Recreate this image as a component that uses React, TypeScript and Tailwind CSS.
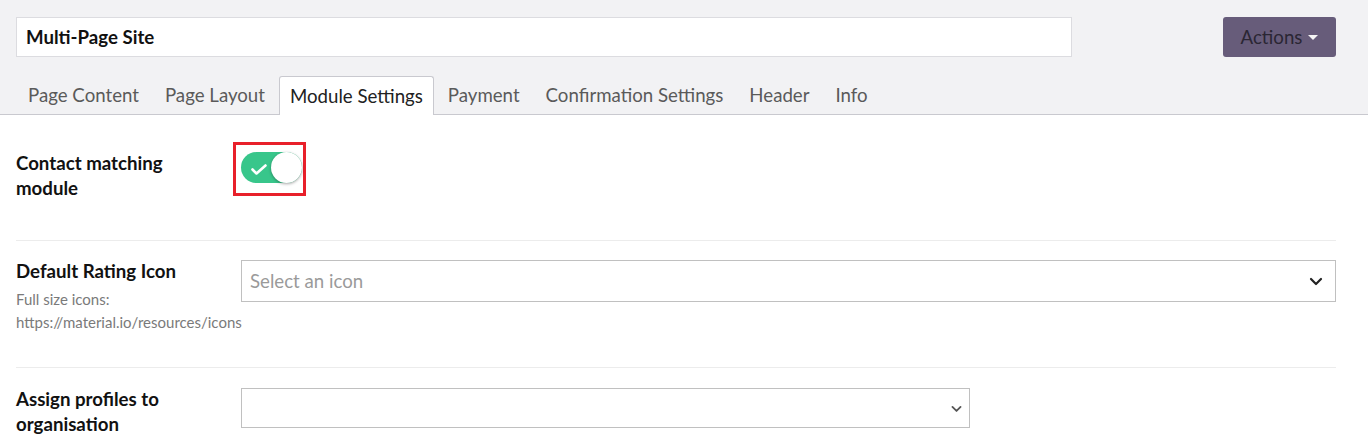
import React from 'react';

const tabs = [
  'Page Content',
  'Page Layout',
  'Module Settings',
  'Payment',
  'Confirmation Settings',
  'Header',
  'Info',
];

const Chevron = ({ className }: { className?: string }) => (
  <svg viewBox="0 0 16 16" className={className} fill="none" stroke="currentColor" strokeWidth={2.2} strokeLinecap="round" strokeLinejoin="round">
    <path d="M3 6l5 5 5-5" />
  </svg>
);

export default function App() {
  return (
    <div className="min-h-[445px] bg-white text-[#212529]" style={{ fontFamily: 'Lato, "Noto Sans", sans-serif' }}>
      {/* Header */}
      <div className="border-b border-[#c9c9cf] bg-[#f2f2f4] px-4 pt-[17px]">
        <div className="flex items-start justify-between">
          <div className="flex h-10 w-[1056px] items-center border border-[#dcdce0] bg-white px-[9px] text-[18.67px] font-bold text-[#111]">
            Multi-Page Site
          </div>
          <button className="mr-[16px] flex h-10 w-[113px] items-center justify-center gap-[6px] rounded-[3px] bg-[#675c7a] text-[18.67px] text-[#2a2633]">
            Actions
            <span className="mt-[1px] h-0 w-0 border-x-[5px] border-t-[5px] border-x-transparent border-t-[#f5f5f5]" />
          </button>
        </div>
        <div className="mt-[19px] flex text-[18.67px] text-[#5a5a5a]">
          {tabs.map((t) =>
            t === 'Module Settings' ? (
              <div
                key={t}
                className="-mb-px mr-[2px] flex h-[39px] items-center rounded-t-[3px] border border-b-0 border-[#c9c9cf] bg-white px-[10px] text-[#212121]"
              >
                {t}
              </div>
            ) : (
              <div key={t} className="mr-[2px] flex h-[38px] items-center px-[12px]">
                {t}
              </div>
            )
          )}
        </div>
      </div>

      {/* Content */}
      <div className="pl-4 pr-8">
        <div className="flex border-b border-[#ececec] pb-[39px] pt-[36px]">
          <div className="w-[225px] text-[18.67px] font-bold leading-[25px] text-[#111]">
            Contact matching
            <br />
            module
          </div>
          <div className="-mt-[9px] ml-[-8px] h-[54px] w-[73px] border-[3px] border-[#e8202a] pl-[5px] pt-[7px]">
            <div className="relative h-[31px] w-[61px] rounded-full bg-[#38c68b]">
              <svg viewBox="0 0 16 11" className="absolute left-[10px] top-[12px] h-[11px] w-[16px]" fill="none" stroke="white" strokeWidth={2.6} strokeLinecap="round" strokeLinejoin="round">
                <path d="M1.5 5.5l4 4 9-8" />
              </svg>
              <div className="absolute right-0 top-0 h-[31px] w-[31px] rounded-full bg-white shadow-[0_1px_3px_rgba(0,0,0,0.35)]" />
            </div>
          </div>
        </div>

        <div className="flex border-b border-[#ececec] pb-[33px] pt-[18px]">
          <div className="w-[225px]">
            <div className="text-[18.67px] font-bold leading-[25px] text-[#111]">Default Rating Icon</div>
            <div className="mt-[4px] whitespace-nowrap text-[15px] leading-[23px] text-[#7a7a7a]">
              Full size icons:
              <br />
              https://material.io/resources/icons
            </div>
          </div>
          <div className="mt-[1px] flex h-[42px] flex-1 items-center justify-between border border-[#c0c0c0] pl-[8px] pr-[11px] text-[18.67px] text-[#9a9a9a]">
            Select an icon
            <Chevron className="h-[16px] w-[16px] text-[#222]" />
          </div>
        </div>

        <div className="flex pt-[19px]">
          <div className="w-[225px] text-[18.67px] font-bold leading-[25px] text-[#111]">
            Assign profiles to
            <br />
            organisation
          </div>
          <div className="mt-[1px] flex h-[40px] w-[729px] items-center justify-end border border-[#c0c0c0] pr-[6px]">
            <Chevron className="h-[13px] w-[13px] text-[#555]" />
          </div>
        </div>
      </div>
    </div>
  );
}
